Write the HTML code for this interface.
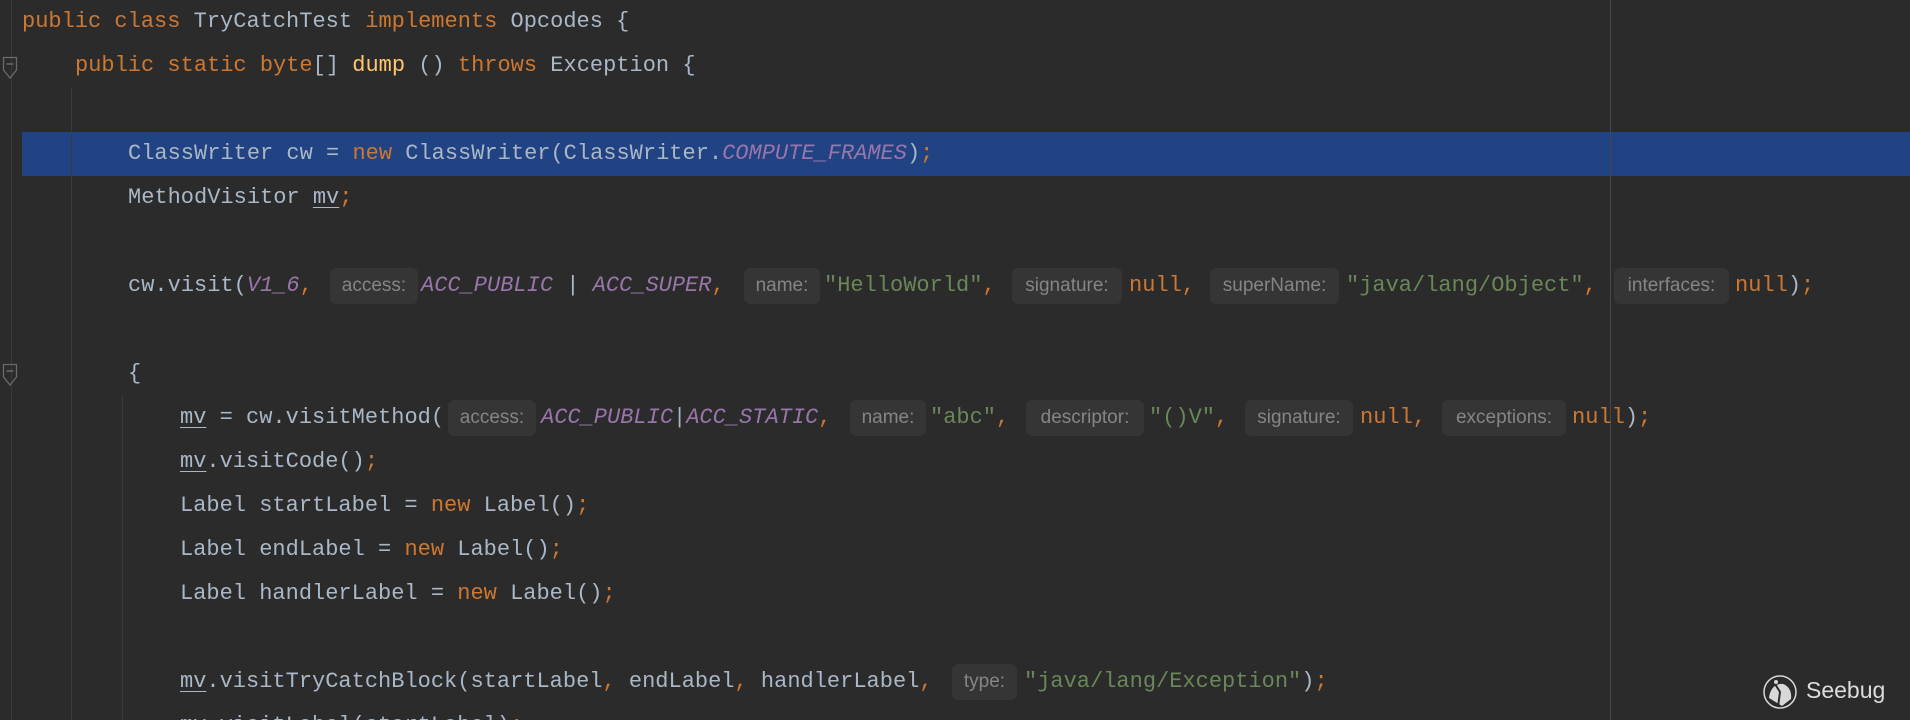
<!DOCTYPE html>
<html><head><meta charset="utf-8"><style>
html{margin:0;padding:0;width:1910px;height:720px;overflow:hidden;background:#2b2b2b;}
body{margin:0;padding:0;width:1910px;height:720px;background:#2b2b2b;position:relative;overflow:hidden;font-family:"Liberation Mono",monospace;font-size:22px;color:#a9b7c6;}
.l{position:absolute;white-space:pre;line-height:44px;height:44px;}
.k{color:#cc7832}.p{color:#9876aa;font-style:italic}.s{color:#6a8759}.y{color:#ffc66d}
.u{text-decoration:underline;text-decoration-thickness:1px;text-underline-offset:4px}
.h{position:absolute;height:36px;line-height:36px;background:#353535;border-radius:6px;color:#858585;font-family:"Liberation Sans",sans-serif;font-size:19px;text-align:center;white-space:pre;}
.g{position:absolute;width:1px;background:#3b3b3b;}
</style></head><body>
<div style="position:absolute;left:22px;top:132px;width:1888px;height:44px;background:#214283"></div>
<div class="g" style="left:11px;top:0;height:720px;background:#3a3a3a"></div>
<div class="g" style="left:71px;top:88px;height:632px;"></div>
<div class="g" style="left:122px;top:396px;height:324px;"></div>
<div class="g" style="left:1610px;top:0;height:720px;background:#474747"></div>
<svg style="position:absolute;left:2px;top:56px" width="16" height="24"><path d="M1.5 1.5H14.5V14L8 22L1.5 14Z" fill="none" stroke="#6a6a6a" stroke-width="1.3"/><path d="M4.5 8H11.5" stroke="#6a6a6a" stroke-width="1.5"/></svg>
<svg style="position:absolute;left:2px;top:363px" width="16" height="24"><path d="M1.5 1.5H14.5V14L8 22L1.5 14Z" fill="none" stroke="#6a6a6a" stroke-width="1.3"/><path d="M4.5 8H11.5" stroke="#6a6a6a" stroke-width="1.5"/></svg>

<div class="l" style="left:22px;top:0"><span class="k">public class </span>TryCatchTest <span class="k">implements </span>Opcodes {</div>
<div class="l" style="left:75px;top:44px"><span class="k">public static byte</span>[] <span class="y">dump</span> () <span class="k">throws </span>Exception {</div>
<div class="l" style="left:128px;top:132px">ClassWriter cw = <span class="k">new </span>ClassWriter(ClassWriter.<span class="p">COMPUTE_FRAMES</span>)<span class="k">;</span></div>
<div class="l" style="left:128px;top:176px">MethodVisitor <span class="u">mv</span><span class="k">;</span></div>

<div class="l" style="left:128px;top:264px">cw.visit(<span class="p">V1_6</span><span class="k">,</span></div>
<div class="h" style="left:330px;top:268px;width:88px">access:</div>
<div class="l p" style="left:421px;top:264px">ACC_PUBLIC <span style="font-style:normal;color:#a9b7c6">|</span> ACC_SUPER<span class="k" style="font-style:normal">,</span></div>
<div class="h" style="left:744px;top:268px;width:76px">name:</div>
<div class="l s" style="left:824px;top:264px">"HelloWorld"<span class="k">,</span></div>
<div class="h" style="left:1012px;top:268px;width:110px">signature:</div>
<div class="l k" style="left:1129px;top:264px">null,</div>
<div class="h" style="left:1210px;top:268px;width:129px">superName:</div>
<div class="l s" style="left:1346px;top:264px">"java/lang/Object"<span class="k">,</span></div>
<div class="h" style="left:1614px;top:268px;width:115px">interfaces:</div>
<div class="l" style="left:1735px;top:264px"><span class="k">null</span>)<span class="k">;</span></div>

<div class="l" style="left:128px;top:352px">{</div>

<div class="l" style="left:180px;top:396px"><span class="u">mv</span> = cw.visitMethod(</div>
<div class="h" style="left:448px;top:400px;width:88px">access:</div>
<div class="l p" style="left:541px;top:396px">ACC_PUBLIC<span style="font-style:normal;color:#a9b7c6">|</span>ACC_STATIC<span class="k" style="font-style:normal">,</span></div>
<div class="h" style="left:850px;top:400px;width:76px">name:</div>
<div class="l s" style="left:930px;top:396px">"abc"<span class="k">,</span></div>
<div class="h" style="left:1026px;top:400px;width:118px">descriptor:</div>
<div class="l s" style="left:1149px;top:396px">"()V"<span class="k">,</span></div>
<div class="h" style="left:1245px;top:400px;width:108px">signature:</div>
<div class="l k" style="left:1360px;top:396px">null,</div>
<div class="h" style="left:1442px;top:400px;width:124px">exceptions:</div>
<div class="l" style="left:1572px;top:396px"><span class="k">null</span>)<span class="k">;</span></div>

<div class="l" style="left:180px;top:440px"><span class="u">mv</span>.visitCode()<span class="k">;</span></div>
<div class="l" style="left:180px;top:484px">Label startLabel = <span class="k">new </span>Label()<span class="k">;</span></div>
<div class="l" style="left:180px;top:528px">Label endLabel = <span class="k">new </span>Label()<span class="k">;</span></div>
<div class="l" style="left:180px;top:572px">Label handlerLabel = <span class="k">new </span>Label()<span class="k">;</span></div>

<div class="l" style="left:180px;top:660px"><span class="u">mv</span>.visitTryCatchBlock(startLabel<span class="k">, </span>endLabel<span class="k">, </span>handlerLabel<span class="k">,</span></div>
<div class="h" style="left:952px;top:664px;width:65px">type:</div>
<div class="l" style="left:1024px;top:660px"><span class="s">"java/lang/Exception"</span>)<span class="k">;</span></div>
<div class="l" style="left:180px;top:704px"><span class="u">mv</span>.visitLabel(startLabel)<span class="k">;</span></div>

<svg style="position:absolute;left:1760px;top:672px" width="42" height="42"><circle cx="20" cy="20" r="16" fill="none" stroke="#d8d8d8" stroke-width="1.5"/><path d="M9 26 C10 16 16 11 23 12 C29 14 32 20 31 27 L22 34 Z" fill="#d8d8d8"/><path d="M15 12 L20 20 L18 35" stroke="#2b2b2b" stroke-width="2" fill="none"/><circle cx="16" cy="10" r="2" fill="#d8d8d8"/></svg>
<div style="position:absolute;left:1806px;top:676px;font-family:'Liberation Sans',sans-serif;font-size:23px;color:#dcdcdc;line-height:28px">Seebug</div>
</body></html>
